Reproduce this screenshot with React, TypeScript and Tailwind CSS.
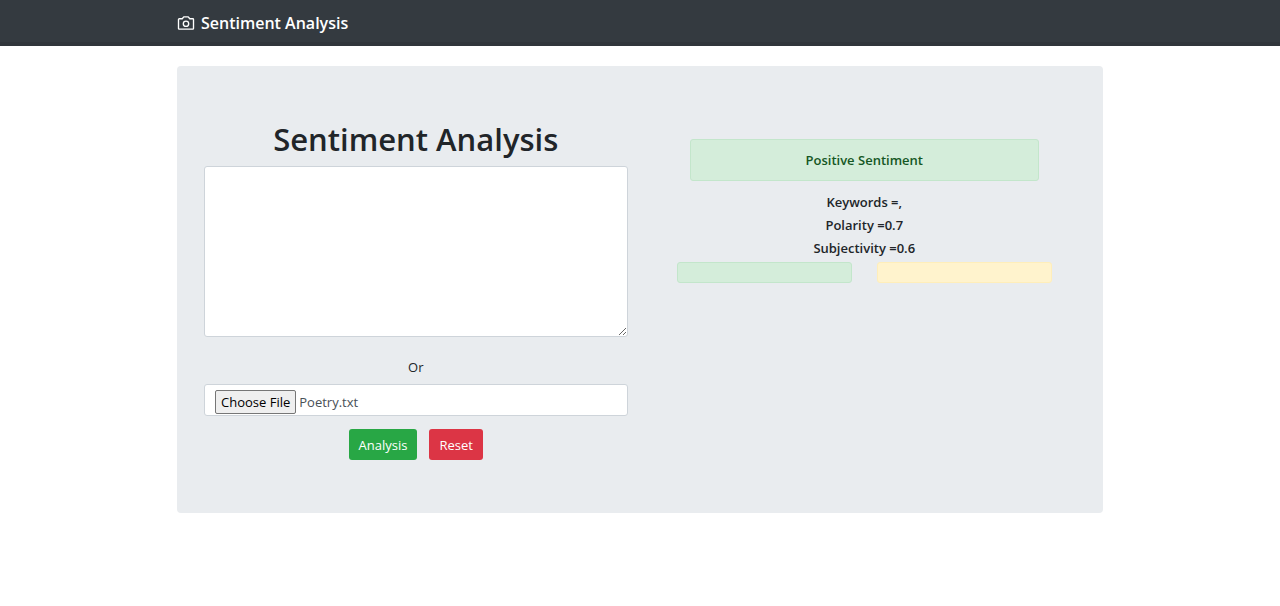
import { useEffect, useRef } from "react";

export default function App() {
  const fileRef = useRef<HTMLInputElement>(null);

  // Start with a sample text file already chosen.
  useEffect(() => {
    if (!fileRef.current) return;
    const transfer = new DataTransfer();
    transfer.items.add(new File(["Poetry"], "Poetry.txt", { type: "text/plain" }));
    fileRef.current.files = transfer.files;
  }, []);

  return (
    <div className="min-h-screen bg-white font-['Open_Sans','Noto_Sans',sans-serif] text-[13px] leading-5 text-[#212529]">
      <header className="border-b-4 border-[#30353b] bg-[#343a40] pt-[11px] pb-[7px]">
        <div className="mx-auto w-full max-w-[926px]">
          <a href="#" className="flex items-center gap-[6px] text-base leading-6 font-semibold text-white">
            <svg className="h-[18px] w-[18px]" viewBox="0 0 24 24" fill="none" stroke="currentColor" strokeWidth="1.8" strokeLinejoin="round" aria-hidden="true">
              <path d="M22 19.2a1 1 0 0 1-1 1H3a1 1 0 0 1-1-1V7.300a1 1 0 0 1 1-1h4l2-2.500h6l2 2.500h4a1 1 0 0 1 1 1z" />
              <circle cx="12" cy="13" r="3.600" />
            </svg>
            Sentiment Analysis
          </a>
        </div>
      </header>
      <main className="mx-auto mt-5 grid w-full max-w-[926px] grid-cols-2 gap-[25px] rounded bg-[#e9ecef] px-[27px] py-[53px]">
        <form className="text-center" onSubmit={(e) => e.preventDefault()}>
          <h1 id="page-title" className="mb-[6px] text-[31px] leading-[41px] font-semibold">Sentiment Analysis</h1>
          <textarea aria-labelledby="page-title" className="block h-[171px] w-full resize rounded-[3px] border border-[#ced4da] bg-white px-[10px] py-[5px]" />
          <label htmlFor="text-file" className="mt-5 block">Or</label>
          <input
            ref={fileRef}
            id="text-file"
            type="file"
            className="mt-[7px] block h-8 w-full rounded-[3px] border border-[#ced4da] bg-white px-[10px] pt-[5px] text-left text-[#495057] file:me-[3px] file:h-6 file:rounded-[2px] file:border file:border-solid file:border-[#767676] file:bg-[#efefef] file:px-[5px] file:text-black"
          />
          <div className="mt-[13px] flex justify-center gap-3">
            <button type="submit" className="h-[31px] rounded-[3px] bg-[#28a745] px-[10px] text-white">Analysis</button>
            <button type="reset" className="h-[31px] rounded-[3px] bg-[#dc3545] px-[10px] text-white">Reset</button>
          </div>
        </form>
        <section className="px-6 pt-5 text-center font-semibold">
          <div className="mx-[13px] mb-[10px] rounded-[3px] border border-[#c3e6cb] bg-[#d4edda] py-[10px] text-[#155724]">Positive Sentiment</div>
          <p className="leading-[23px]">Keywords =,</p>
          <p className="leading-[23px]">Polarity =0.7</p>
          <p className="leading-[23px]">Subjectivity =0.6</p>
          <div className="mt-[2px] grid grid-cols-2 gap-[25px]">
            <div className="h-[21px] rounded-[3px] border border-[#c3e6cb] bg-[#d4edda]" />
            <div className="h-[21px] rounded-[3px] border border-[#ffeeba] bg-[#fff3cd]" />
          </div>
        </section>
      </main>
    </div>
  );
}
